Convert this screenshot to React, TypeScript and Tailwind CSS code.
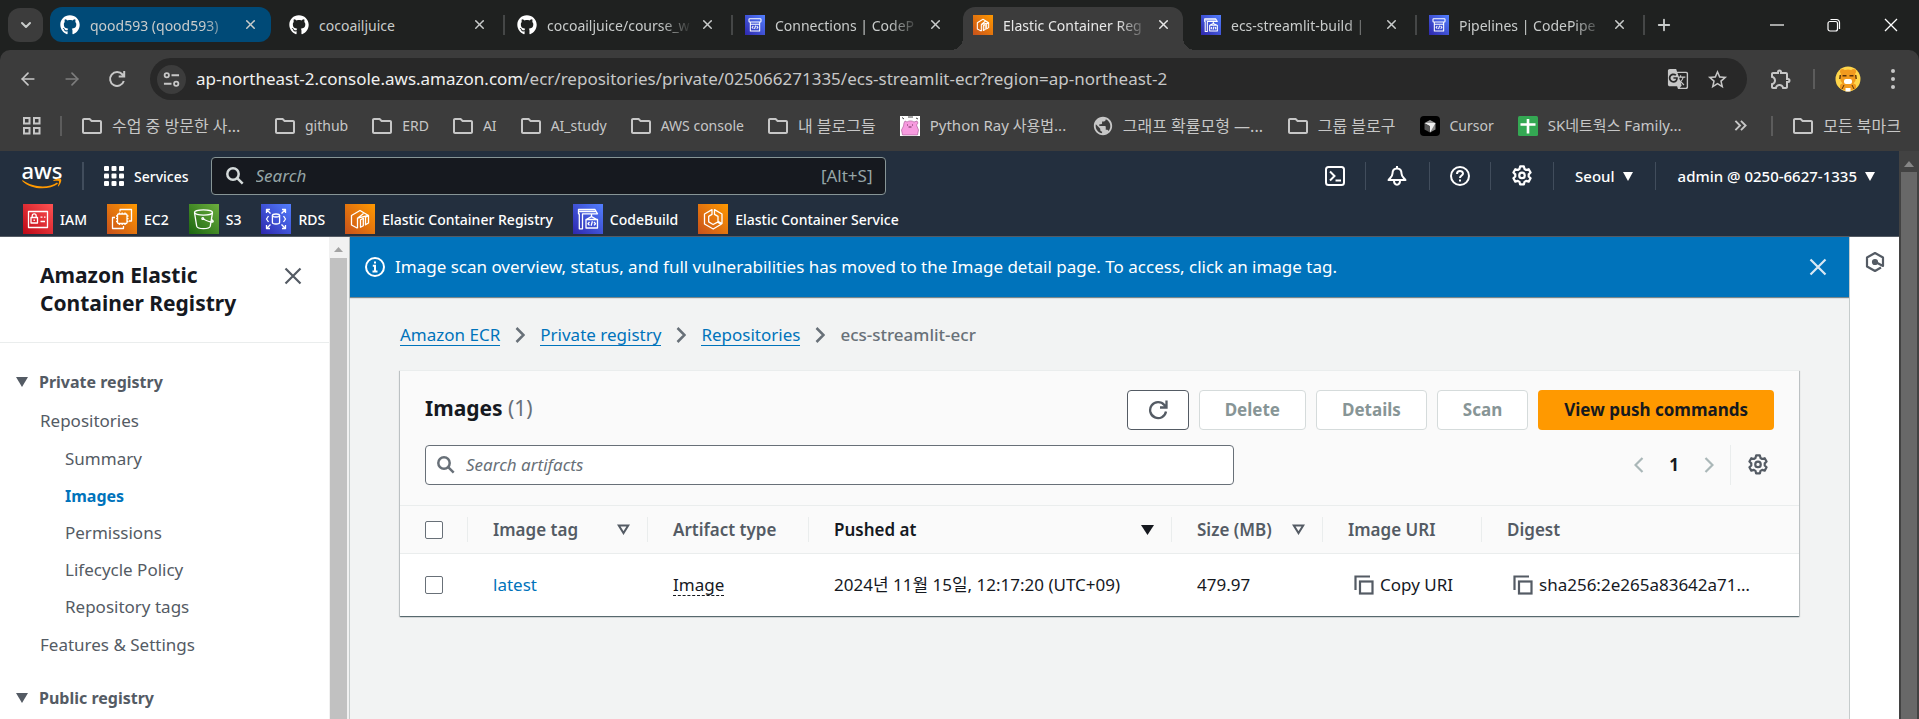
import { useState, type ReactNode } from "react";
import { FaGithub } from "react-icons/fa";
import { MdOutlineExtension, MdStarOutline, MdOutlineFolder, MdPublic, MdGTranslate } from "react-icons/md";
import { ArrowLeft, ArrowRight, ChevronDown, Plus, X } from "lucide-react";

type TileKind = "iam" | "ec2" | "s3" | "rds" | "ecr" | "build" | "ecs" | "pipe";

const TILE_GRADIENT: Record<TileKind, [string, string]> = {
  iam: ["#bd0816", "#ff5252"],
  ec2: ["#c8511b", "#ff9900"],
  s3: ["#1b660f", "#6cae3e"],
  rds: ["#2e27ad", "#527fff"],
  ecr: ["#c8511b", "#ff9900"],
  build: ["#2e27ad", "#527fff"],
  ecs: ["#c8511b", "#ff9900"],
  pipe: ["#2e27ad", "#527fff"],
};

const TILE_ART: Record<TileKind, ReactNode> = {
  iam: (
    <>
      <rect x="5.5" y="7.5" width="19" height="16" />
      <rect x="8" y="13.5" width="6.5" height="5.5" />
      <path d="M9.2 13.5v-1.6a2 2 0 0 1 4 0v1.6M11.2 15.6v1.4M17.500 13.200h2M21 13.200h1.500M17.500 17.500h4.500" />
    </>
  ),
  ec2: (
    <>
      <path d="M13 7.500V5.500h11.500v11.500h-2.500M8 13.500H5.500v11h11v-2.500" />
      <rect x="10.500" y="10" width="9.500" height="9.500" rx="1" />
      <path d="M12.500 8.500v1.500M15.200 8.500v1.500M18 8.500v1.500M12.500 19.500V21M15.200 19.500V21M18 19.500V21M9 12h1.500M9 14.700h1.500M9 17.500h1.500M20 12h1.500M20 14.700h1.500M20 17.500h1.500" />
    </>
  ),
  s3: (
    <>
      <ellipse cx="14.500" cy="8.500" rx="9" ry="2.600" />
      <path d="M5.500 8.700l2.200 13.500c.4 1.600 3.500 2.500 6.800 2.500s6.400-.9 6.800-2.500l2.200-13.500M14 14.700c3.500 2 7 3.400 9.500 3.300 1.300-.1.600-1.500-1-2.400" />
      <circle cx="13.800" cy="14.500" r=".9" />
    </>
  ),
  rds: (
    <>
      <path d="M5.500 9V5.500H9M5.800 5.800l3.700 3.700M21 5.500h3.500V9M24.200 5.800l-3.700 3.700M5.500 21v3.500H9M5.800 24.200l3.700-3.700M21 24.500h3.500V21M24.200 24.200l-3.700-3.700M7.500 12l-2 3 2 3M22.500 12l2 3-2 3" />
      <ellipse cx="15" cy="11.500" rx="3.600" ry="1.500" />
      <path d="M11.400 11.500v7c0 .8 1.600 1.500 3.600 1.500s3.600-.7 3.600-1.500v-7" />
    </>
  ),
  ecr: (
    <>
      <path d="M12.500 24.200L6.500 21v-9.500l8.500-5 8.500 5M12.500 24.200v-10l11-2.700M12.500 14.200l6-4.800" />
      <path d="M15.500 15.800l2.800-1.600v7.500l-2.800 1.500zM20.500 13.200l3-1.700v7.500l-3 1.800z" />
    </>
  ),
  build: (
    <>
      <path d="M5.500 5.500h16.500l2.500 4.300H9.500v15H6.300V9.800H5.500zM5.500 7.500h17.500M18.500 10v3M13 15.500l5.500-2.800 5.500 2.800M13 15.500h11.500v8.500H13z" />
      <path d="M16.500 18l-1.500 1.700 1.500 1.700M21 18l1.500 1.700-1.500 1.700M19.400 17.300l-1.300 4.500" />
    </>
  ),
  ecs: (
    <>
      <path d="M14 5.600L6.500 10v10l8.700 5 8-4.700-3.600-2.200-4.500 2.400-4.400-2.600v-5.500l3.300-2zM16.500 5.600l7.500 4.400v9.500l-4-2.300v-4.800l-3.500-2z" />
    </>
  ),
  pipe: (
    <>
      <rect x="6" y="5.500" width="18" height="5" rx="1" />
      <path d="M8 10.500V24h14V10.500M8 14h14" />
      <path d="M12.500 16.500l-1.800 2 1.800 2M17.500 16.500l1.800 2-1.800 2M15.900 16l-1.600 5" />
    </>
  ),
};

function ServiceTile({ kind, id, small = false }: { kind: TileKind; id: string; small?: boolean }) {
  const [from, to] = TILE_GRADIENT[kind];
  return (
    <svg viewBox="0 0 30 30" className={small ? "size-5 shrink-0" : "size-[30px] shrink-0"} aria-hidden="true">
      <defs>
        <linearGradient id={id} x1="0" y1="1" x2="1" y2="0">
          <stop offset="0" stopColor={from} />
          <stop offset="1" stopColor={to} />
        </linearGradient>
      </defs>
      <rect width="30" height="30" fill={`url(#${id})`} />
      <g fill="none" stroke="#fff" strokeWidth={small ? 1.6 : 1.3} strokeLinejoin="round">
        {TILE_ART[kind]}
      </g>
    </svg>
  );
}

function GearIcon({ className }: { className: string }) {
  return (
    <svg viewBox="0 0 20 20" className={className} fill="none" stroke="currentColor" strokeWidth="2" strokeLinejoin="round" aria-hidden="true">
      <path d="M8.300 1.300h3.400l.6 2.300 1.500.9 2.300-.7 1.700 3-1.700 1.700v1.900l1.700 1.700-1.700 3-2.300-.7-1.500.9-.6 2.400H8.300l-.6-2.400-1.500-.9-2.300.7-1.700-3 1.700-1.700V8.500L2.200 6.800l1.700-3 2.300.7 1.500-.9z" />
      <circle cx="10" cy="9.500" r="2.500" />
    </svg>
  );
}

function SearchIcon({ className }: { className: string }) {
  return (
    <svg viewBox="0 0 18 18" className={className} fill="none" stroke="currentColor" strokeWidth="2.500" aria-hidden="true">
      <circle cx="7" cy="7" r="5.700" />
      <path d="M11.200 11.200l5.500 5.500" />
    </svg>
  );
}

function CloseIcon({ className }: { className: string }) {
  return (
    <svg viewBox="0 0 18 18" className={className} fill="none" stroke="currentColor" strokeWidth="2.200" aria-hidden="true">
      <path d="M1.500 1.500l15 15M16.500 1.500l-15 15" />
    </svg>
  );
}

function CopyIcon() {
  return (
    <svg viewBox="0 0 20 20" className="size-5 shrink-0 text-[#545b64]" fill="none" stroke="currentColor" strokeWidth="2.200" aria-hidden="true">
      <path d="M1.500 15V1.500H16" />
      <rect x="6" y="6.500" width="12.500" height="12" />
    </svg>
  );
}

function Caret({ className }: { className: string }) {
  return (
    <svg viewBox="0 0 12 10" className={className} fill="currentColor" preserveAspectRatio="none" aria-hidden="true">
      <path d="M0 0h12L6 10z" />
    </svg>
  );
}

function SortCaret() {
  return (
    <svg viewBox="0 0 13 11" className="h-[11px] w-[13px]" fill="none" stroke="currentColor" strokeWidth="2" aria-hidden="true">
      <path d="M1.800 1.500h9.400l-4.700 7.500z" />
    </svg>
  );
}

/* ---------- Browser window ---------- */

type Tab = { title: string; icon: ReactNode; state?: "active"; sep?: boolean };

const GITHUB = <FaGithub className="size-5 shrink-0 text-white" />;

const TABS: Tab[] = [
  { title: "cocoailjuice", icon: GITHUB, sep: true },
  { title: "cocoailjuice/course_w", icon: GITHUB, sep: true },
  { title: "Connections | CodeP", icon: <ServiceTile small kind="pipe" id="t1" /> },
  { title: "Elastic Container Reg", icon: <ServiceTile small kind="ecr" id="t2" />, state: "active" },
  { title: "ecs-streamlit-build |", icon: <ServiceTile small kind="build" id="t3" />, sep: true },
  { title: "Pipelines | CodePipe", icon: <ServiceTile small kind="pipe" id="t4" />, sep: true },
];

function TabBody({ icon, title }: { icon: ReactNode; title: string }) {
  const faded = title !== "cocoailjuice";
  return (
    <>
      {icon}
      <span
        className={
          faded
            ? "ml-[10px] w-[146px] overflow-hidden pt-0.5 whitespace-nowrap [mask-image:linear-gradient(to_right,black_78%,transparent)]"
            : "ml-[10px] w-[146px] overflow-hidden pt-0.5 whitespace-nowrap"
        }
      >
        {title}
      </span>
      <button aria-label="Close tab" className="ml-[6px] grid size-4 place-items-center">
        <X className="size-[15px]" strokeWidth={2.4} />
      </button>
    </>
  );
}

function TabItem({ tab }: { tab: Tab }) {
  const active = tab.state === "active";
  return (
    <div
      className={
        active
          ? "relative mt-[7px] mr-2 flex h-[43px] w-[220px] items-center rounded-t-xl bg-[#3c3c3c] pb-2 pl-[10px] text-[#e8e8e8] before:absolute before:bottom-0 before:-left-3 before:size-3 before:bg-[radial-gradient(circle_at_0_0,transparent_12px,#3c3c3c_12px)] after:absolute after:-right-3 after:bottom-0 after:size-3 after:bg-[radial-gradient(circle_at_100%_0,transparent_12px,#3c3c3c_12px)]"
          : "mt-[7px] flex h-[43px] w-[228px] items-center pb-2 pl-[10px]"
      }
    >
      <TabBody icon={tab.icon} title={tab.title} />
      {tab.sep ? <span className="ml-4 h-5 w-0.5 bg-[#454747]" /> : null}
    </div>
  );
}

function TabStrip() {
  return (
    <div className="flex h-[50px] bg-[#1f2120] text-[14px] text-[#c9cccb]">
      <button aria-label="Search tabs" className="mt-2 ml-2 grid h-[34px] w-[35px] place-items-center rounded-xl bg-[#3c3c3c]">
        <ChevronDown className="size-4" strokeWidth={3} />
      </button>
      <div className="mt-[7px] ml-[7px] flex h-[35px] w-[221px] items-center rounded-xl bg-[#004a77] pl-[10px]">
        <TabBody icon={GITHUB} title="qood593 (qood593)" />
      </div>
      <div className="ml-2 flex">
        {TABS.map((t) => (
          <TabItem key={t.title} tab={t} />
        ))}
      </div>
      <button aria-label="New tab" className="ml-[5px] grid h-[50px] w-6 place-items-center">
        <Plus className="size-[18px]" strokeWidth={2.4} />
      </button>
      <div className="ml-auto flex items-center gap-[43px] pr-[21px] text-white">
        <button aria-label="Minimize">
          <svg viewBox="0 0 14 14" className="size-[14px]" stroke="currentColor" strokeWidth="1.200"><path d="M0 7h14" /></svg>
        </button>
        <button aria-label="Restore">
          <svg viewBox="0 0 14 14" className="size-[14px]" fill="none" stroke="currentColor" strokeWidth="1.200">
            <rect x="1" y="3.500" width="9.500" height="9.500" rx="2" />
            <path d="M3.500 1.500h6a3 3 0 0 1 3 3V11" />
          </svg>
        </button>
        <button aria-label="Close window">
          <svg viewBox="0 0 14 14" className="size-[14px]" stroke="currentColor" strokeWidth="1.300"><path d="M1 1l12 12M13 1L1 13" /></svg>
        </button>
      </div>
    </div>
  );
}

function Toolbar() {
  return (
    <div className="bg-[#1f2120]">
      <div className="flex items-center rounded-t-[10px] bg-[#3c3c3c] pt-2 pl-[18px] text-[#c7c7c7]">
        <button aria-label="Back" className="grid size-5 place-items-center"><ArrowLeft className="size-5" /></button>
        <button aria-label="Forward" className="ml-6 grid size-5 place-items-center text-[#7d7d7d]"><ArrowRight className="size-5" /></button>
        <button aria-label="Reload" className="ml-[25px] grid size-5 place-items-center">
          <svg viewBox="0 0 20 20" className="size-5" fill="none" stroke="currentColor" strokeWidth="2">
            <path d="M16.800 12A7 7 0 1 1 15.500 5.500L17 7.200M17.200 2v5.500h-5.500" />
          </svg>
        </button>
        <div className="ml-[23px] flex h-[42px] flex-1 items-center rounded-full bg-[#282828] pl-[7px]">
          <button aria-label="Site information" className="grid size-[29px] place-items-center rounded-full bg-[#3c3c3c]">
            <svg viewBox="0 0 18 18" className="size-[17px]" fill="none" stroke="currentColor" strokeWidth="1.900">
              <circle cx="4" cy="4.500" r="2.300" />
              <path d="M9 4.500h8M1 13.500h8" />
              <circle cx="14" cy="13.500" r="2.300" />
            </svg>
          </button>
          <div className="ml-[10px] flex-1 text-[17px] whitespace-nowrap text-[#c7c7c7]">
            <span className="text-[#f0f0f0]">ap-northeast-2.console.aws.amazon.com</span>/ecr/repositories/private/025066271335/ecs-streamlit-ecr?region=ap-northeast-2
          </div>
          <button aria-label="Translate"><MdGTranslate className="size-[22px]" /></button>
          <button aria-label="Bookmark this page" className="mr-[18px] ml-[17px]"><MdStarOutline className="size-[23px]" /></button>
        </div>
        <button aria-label="Extensions" className="ml-[22px]"><MdOutlineExtension className="size-6" /></button>
        <span className="ml-5 h-5 w-0.5 bg-[#5c5c5c]" />
        <button aria-label="Profile" className="ml-5">
          <svg viewBox="0 0 26 26" className="size-[26px]">
            <circle cx="13" cy="13" r="12.500" fill="#ffd54a" />
            <circle cx="7.500" cy="5.500" r="2.500" fill="#f29a1f" />
            <circle cx="18.500" cy="5.500" r="2.500" fill="#f29a1f" />
            <circle cx="13" cy="11.500" r="8" fill="#f29a1f" />
            <path d="M5 19c2-3 14-3 16 0v3.500l-8 3-8-3z" fill="#f29a1f" />
            <path d="M7.500 9.800h4M14.500 9.800h4M5.300 9l-.5 4M20.700 9l.5 4" stroke="#5b3208" strokeWidth="1.400" />
            <rect x="9" y="13" width="8" height="5" rx="2" fill="#fff" />
            <path d="M10.500 22h5v3.500h-5z" fill="#fff" />
            <path d="M9 19l-2 4M17 19l2 4" stroke="#5b3208" strokeWidth="1" />
          </svg>
        </button>
        <button aria-label="Browser menu" className="mr-4 ml-[22px] grid h-6 w-5 place-items-center">
          <svg viewBox="0 0 4 20" className="h-5 w-1" fill="currentColor">
            <circle cx="2" cy="2" r="2" /><circle cx="2" cy="10" r="2" /><circle cx="2" cy="18" r="2" />
          </svg>
        </button>
      </div>
    </div>
  );
}

const FOLDER = <MdOutlineFolder className="-mx-0.5 size-6 shrink-0" />;

const BOOKMARKS: { label: string; icon: ReactNode; size?: string }[] = [
  { label: "수업 중 방문한 사...", icon: FOLDER, size: "w-[139px] text-[16px]" },
  { label: "github", icon: FOLDER },
  { label: "ERD", icon: FOLDER },
  { label: "AI", icon: FOLDER },
  { label: "AI_study", icon: FOLDER },
  { label: "AWS console", icon: FOLDER },
  { label: "내 블로그들", icon: FOLDER, size: "text-[16px]" },
  {
    label: "Python Ray 사용법...",
    size: "w-[139px] text-[15px]",
    icon: (
      <svg viewBox="0 0 20 20" className="size-5 shrink-0">
        <rect width="20" height="20" fill="#fff" />
        <path d="M4 7l1-2 2 1c2-1.500 5-1.500 7 0l3-1 1 2-1.500 2 2 5-1 5H2.500l-1-5L3.500 10z" fill="#f79bdf" stroke="#a3508e" strokeWidth=".6" />
        <path d="M2 1.500l2 1.500M8 1h5M16 2l2 1" stroke="#444" strokeWidth="1" />
        <path d="M7 9h1M12 9h1M8.500 11h3" stroke="#5c2149" strokeWidth=".9" />
      </svg>
    ),
  },
  { label: "그래프 확률모형 —...", icon: <MdPublic className="-mx-px size-[22px] shrink-0" />, size: "w-[141px] text-[16px]" },
  { label: "그룹 블로구", icon: FOLDER, size: "text-[16px]" },
  {
    label: "Cursor",
    icon: (
      <svg viewBox="0 0 20 20" className="size-5 shrink-0">
        <rect width="20" height="20" rx="4" fill="#000" />
        <path d="M10 4l5.500 3L10 10 4.500 7z" fill="#999" />
        <path d="M4.500 7l5.500 3v6.500l-5.500-3z" fill="#555" />
        <path d="M15.500 7L10 10v6.500l5.500-3z" fill="#888" />
        <path d="M4.500 7h11L10 16.500V10z" fill="#eee" />
      </svg>
    ),
  },
  {
    label: "SK네트웍스 Family...",
    size: "text-[15px]",
    icon: (
      <svg viewBox="0 0 20 20" className="size-5 shrink-0">
        <rect width="20" height="20" rx="1.500" fill="#34a853" />
        <path d="M10 3v14.500M2.500 8.500h15" stroke="#fff" strokeWidth="2.600" />
      </svg>
    ),
  },
];

function BookmarkBar() {
  return (
    <div className="flex h-[51px] items-center bg-[#3c3c3c] pl-[23px] text-[14px] whitespace-nowrap text-[#c7c7c7]">
      <button aria-label="Apps">
        <svg viewBox="0 0 18 18" className="size-[18px]" fill="none" stroke="currentColor" strokeWidth="2">
          <rect x="1" y="1" width="5.500" height="5.500" /><rect x="11" y="1" width="5.500" height="5.500" />
          <rect x="1" y="11" width="5.500" height="5.500" /><rect x="11" y="11" width="5.500" height="5.500" />
        </svg>
      </button>
      <span className="ml-[19px] h-5 w-0.5 bg-[#5c5c5c]" />
      <div className="ml-5 flex gap-6">
        {BOOKMARKS.map((b) => (
          <a key={b.label} href="#" className="flex items-center gap-[10px]">
            {b.icon}
            <span className={b.size}>{b.label}</span>
          </a>
        ))}
      </div>
      <button aria-label="More bookmarks" className="ml-auto">
        <svg viewBox="0 0 14 14" className="size-[13px]" fill="none" stroke="currentColor" strokeWidth="2"><path d="M1.500 2l5 5-5 5M7.500 2l5 5-5 5" /></svg>
      </button>
      <span className="ml-6 h-5 w-0.5 bg-[#5c5c5c]" />
      <a href="#" className="mr-[18px] ml-5 flex items-center gap-[10px] text-[16px]">
        {FOLDER}모든 북마크
      </a>
    </div>
  );
}

/* ---------- AWS console ---------- */

const FAVORITES: { label: string; kind: TileKind }[] = [
  { label: "IAM", kind: "iam" },
  { label: "EC2", kind: "ec2" },
  { label: "S3", kind: "s3" },
  { label: "RDS", kind: "rds" },
  { label: "Elastic Container Registry", kind: "ecr" },
  { label: "CodeBuild", kind: "build" },
  { label: "Elastic Container Service", kind: "ecs" },
];

function NavSep() {
  return <span className="h-7 w-px bg-[#414d5c]" />;
}

function ConsoleHeader() {
  return (
    <header className="border-b border-[#545b64] bg-[#232f3e] text-[14px] font-medium text-white">
      <div className="flex h-[50px] items-center pl-[22px]">
        <a href="#" aria-label="AWS home" className="flex w-10 flex-col items-center">
          <span className="text-[22px] leading-[15px] font-medium">aws</span>
          <svg viewBox="0 0 40 11" className="h-[11px] w-10" aria-hidden="true">
            <path d="M.5 2c10 7.500 26 8.500 34.500 2.500l1 1.200C27 12.500 9 12 .2 3z" fill="#ff9900" />
            <path d="M31.500 2.200c3-1.800 7-1.700 7.600-.8.700 1-.6 5-2.600 6.800-.5.400-.8.200-.6-.3.700-1.700 1.500-4 1-4.700-.5-.6-3.500-.5-5-.2-.6 0-.8-.5-.4-.8z" fill="#ff9900" />
          </svg>
        </a>
        <span className="ml-5 h-7 w-0.5 bg-[#414d5c]" />
        <button className="ml-5 flex items-center gap-[10px]">
          <svg viewBox="0 0 20 20" className="size-5" fill="currentColor" aria-hidden="true">
            {[0, 7.5, 15].flatMap((y) => [0, 7.5, 15].map((x) => <rect key={`${x}-${y}`} x={x} y={y} width="5" height="5" rx="1" />))}
          </svg>
          Services
        </button>
        <label className="ml-[22px] flex h-[38px] w-[675px] items-center rounded-sm border border-[#879596] bg-[#16191f] pr-[12px] pl-[14px] text-[17px] font-normal text-[#95a5a6]">
          <SearchIcon className="size-[18px] text-[#d5dbdb]" />
          <input aria-label="Search" placeholder="Search" className="ml-3 min-w-0 flex-1 bg-transparent italic outline-none placeholder:text-[#95a5a6]" />
          [Alt+S]
        </label>
        <div className="ml-auto flex items-center text-[15px]">
          <button aria-label="CloudShell">
            <svg viewBox="0 0 20 20" className="size-5" fill="none" stroke="currentColor" strokeWidth="2">
              <rect x="1" y="1" width="18" height="18" rx="2.500" />
              <path d="M5 5.500l4.500 4.500L5 14.500M10.500 14.500H16" />
            </svg>
          </button>
          <span className="w-5" /><NavSep /><span className="w-[21px]" />
          <button aria-label="Notifications">
            <svg viewBox="0 0 20 20" className="size-5" fill="none" stroke="currentColor" strokeWidth="2" strokeLinejoin="round">
              <path d="M10 2.500c-3.500 0-4.500 2.500-4.500 5 0 3-2 4-4 6.500h17c-2-2.500-4-3.500-4-6.500 0-2.500-1-5-4.500-5zM10 0v2.500M7 14.500c0 5.500 6 5.500 6 0" />
            </svg>
          </button>
          <span className="w-[22px]" /><NavSep /><span className="w-5" />
          <button aria-label="Help">
            <svg viewBox="0 0 20 20" className="size-5" fill="none" stroke="currentColor" strokeWidth="2">
              <circle cx="10" cy="10" r="9" />
              <path d="M7 8c0-4 6-3.800 6-.5 0 2-3 2-3 4.500M10 13.500v2" />
            </svg>
          </button>
          <span className="w-5" /><NavSep /><span className="w-5" />
          <button aria-label="Settings"><GearIcon className="size-[22px]" /></button>
          <span className="w-5" /><NavSep /><span className="w-[21px]" />
          <button className="flex items-center gap-2">Seoul <Caret className="h-[9px] w-[10px]" /></button>
          <span className="w-[22px]" /><NavSep /><span className="w-[22px]" />
          <button className="flex items-center gap-2">admin @ 0250-6627-1335 <Caret className="h-[9px] w-[10px]" /></button>
          <span className="w-6" />
        </div>
      </div>
      <nav className="flex h-[35px] items-start gap-5 pt-[3px] pl-[23px]">
        {FAVORITES.map((f) => (
          <a key={f.label} href="#" className="flex items-center gap-[7px]">
            <ServiceTile kind={f.kind} id={`fav-${f.kind}`} />
            {f.label}
          </a>
        ))}
      </nav>
    </header>
  );
}

function Sidebar() {
  const sub = ["Summary", "Images", "Permissions", "Lifecycle Policy", "Repository tags"];
  return (
    <aside className="flex w-[350px] shrink-0 bg-white">
      <div className="flex-1 text-[#545b64]">
        <div className="flex items-start justify-between border-b border-[#eaeded] pt-6 pr-[27px] pb-[25px] pl-10">
          <h2 className="text-[21px] leading-7 font-bold text-[#16191f]">
            Amazon Elastic
            <br />
            Container Registry
          </h2>
          <button aria-label="Close navigation" className="mt-[6px]"><CloseIcon className="size-[18px]" /></button>
        </div>
        <nav className="pt-[23px]">
          <button className="flex h-8 items-center gap-[11px] pl-4 text-[16px] font-bold">
            <Caret className="h-[10px] w-3" />
            Private registry
          </button>
          <ul className="mt-1 pl-10">
            <li className="flex h-[37px] items-center"><a href="#">Repositories</a></li>
            <li className="my-px pl-[25px]">
              <ul>
                {sub.map((s) => (
                  <li key={s} className="flex h-[37px] items-center">
                    <a href="#" className={s === "Images" ? "text-[16px] font-bold text-[#0073bb]" : ""}>{s}</a>
                  </li>
                ))}
              </ul>
            </li>
            <li className="flex h-[37px] items-center"><a href="#">Features &amp; Settings</a></li>
          </ul>
          <button className="mt-[19px] flex h-8 items-center gap-[11px] pl-4 text-[16px] font-bold">
            <Caret className="h-[10px] w-3" />
            Public registry
          </button>
        </nav>
      </div>
      <div className="flex w-[21px] flex-col items-center border-r border-[#c6cccc] bg-[#f1f1f1] pr-0.5">
        <div className="grid h-[21px] place-items-center text-[#a3a3a3]"><Caret className="mt-1 h-[5px] w-[9px] rotate-180" /></div>
        <div className="w-[17px] flex-1 bg-[#c1c1c1]" />
      </div>
    </aside>
  );
}

function Crumb({ children }: { children: string }) {
  return (
    <>
      <a href="#" className="border-b border-[#0073bb] leading-[21px] text-[#0073bb]">{children}</a>
      <svg viewBox="0 0 10 16" className="h-4 w-[10px] text-[#687078]" fill="none" stroke="currentColor" strokeWidth="2.500" aria-hidden="true">
        <path d="M1.500 1l7 7-7 7" />
      </svg>
    </>
  );
}

function PlainButton({ children }: { children: ReactNode }) {
  return (
    <button className="h-10 rounded-sm border border-[#d5dbdb] bg-white px-[25px] font-bold text-[#879596]">{children}</button>
  );
}

function HeadCell({ label, sort, strong = false, last = false }: { label: string; sort?: ReactNode; strong?: boolean; last?: boolean }) {
  return (
    <th scope="col" className={strong ? "p-0 text-left font-semibold text-[#16191f]" : "p-0 text-left font-semibold"}>
      <div className={last ? "flex h-[25px] items-center pr-5 pl-[25px]" : "flex h-[25px] items-center justify-between border-r border-[#eaeded] pr-[17px] pl-[25px] whitespace-nowrap"}>
        {label}
        {sort}
      </div>
    </th>
  );
}

function Checkbox({ label, checked, onChange }: { label: string; checked: boolean; onChange: (v: boolean) => void }) {
  return (
    <input
      type="checkbox"
      aria-label={label}
      checked={checked}
      onChange={(e) => onChange(e.target.checked)}
      className="block size-[18px] appearance-none rounded-[2px] border border-[#687078] bg-white checked:bg-[#0073bb]"
    />
  );
}

function ImagesCard() {
  const [picked, setPicked] = useState(false);
  return (
    <section className="border-t border-[#eaeded] bg-white shadow-[0_1px_1px_0_rgba(0,28,36,0.5),1px_1px_1px_0_rgba(0,28,36,0.15),-1px_1px_1px_0_rgba(0,28,36,0.15)]">
      <div className="bg-[#fafafa] px-[25px] pt-[19px] pb-5">
        <div className="flex h-10 items-center gap-[10px]">
          <h1 className="mr-auto pb-1 text-[21px] leading-7 font-bold text-[#16191f]">
            Images <span className="font-normal text-[#687078]">(1)</span>
          </h1>
          <button aria-label="Refresh" className="grid h-10 w-[62px] place-items-center rounded-sm border border-[#545b64] bg-white text-[#545b64]">
            <svg viewBox="0 0 20 20" className="size-5" fill="none" stroke="currentColor" strokeWidth="2.300">
              <path d="M18 11.500A8 8 0 1 1 16.300 5L18 7M18.500 .500V7.500H12" />
            </svg>
          </button>
          <PlainButton>Delete</PlainButton>
          <PlainButton>Details</PlainButton>
          <PlainButton>Scan</PlainButton>
          <button className="h-10 rounded-sm bg-[#ff9900] px-[26px] font-bold text-[#16191f]">View push commands</button>
        </div>
        <div className="mt-[15px] flex items-center">
          <label className="flex h-10 w-[60%] items-center rounded-sm border border-[#687078] bg-white px-[11px]">
            <SearchIcon className="size-[18px] text-[#687078]" />
            <input aria-label="Search artifacts" placeholder="Search artifacts" className="ml-[11px] min-w-0 flex-1 bg-transparent italic outline-none placeholder:text-[#687078]" />
          </label>
          <div className="ml-auto flex h-10 items-center text-[#aab7b8]">
            <button aria-label="Previous page">
              <svg viewBox="0 0 10 16" className="h-4 w-[10px]" fill="none" stroke="currentColor" strokeWidth="2.200"><path d="M8.500 1l-7 7 7 7" /></svg>
            </button>
            <span className="w-[60px] text-center font-bold text-[#16191f]">1</span>
            <button aria-label="Next page">
              <svg viewBox="0 0 10 16" className="h-4 w-[10px]" fill="none" stroke="currentColor" strokeWidth="2.200"><path d="M1.500 1l7 7-7 7" /></svg>
            </button>
            <span className="mr-4 ml-4 h-10 w-px bg-[#eaeded]" />
            <button aria-label="Preferences" className="mr-[5px] text-[#545b64]"><GearIcon className="size-[22px]" /></button>
          </div>
        </div>
      </div>
      <table className="w-full table-fixed border-collapse text-[#16191f]">
        <colgroup>
          <col className="w-[68px]" />
          <col className="w-[180px]" />
          <col className="w-[161px]" />
          <col className="w-[363px]" />
          <col className="w-[151px]" />
          <col className="w-[159px]" />
          <col />
        </colgroup>
        <thead>
          <tr className="h-12 border-y border-[#eaeded] bg-[#fafafa] text-[#545b64]">
            <th className="p-0">
              <div className="flex h-[25px] items-center border-r border-[#eaeded] pl-[25px]">
                <Checkbox label="Select all images" checked={picked} onChange={setPicked} />
              </div>
            </th>
            <HeadCell label="Image tag" sort={<SortCaret />} />
            <HeadCell label="Artifact type" />
            <HeadCell label="Pushed at" strong sort={<Caret className="h-[10px] w-[13px]" />} />
            <HeadCell label="Size (MB)" sort={<SortCaret />} />
            <HeadCell label="Image URI" />
            <HeadCell label="Digest" last />
          </tr>
        </thead>
        <tbody>
          <tr className="h-[62px]">
            <td className="p-0 pl-[25px]"><Checkbox label="Select latest" checked={picked} onChange={setPicked} /></td>
            <td className="p-0 pl-[25px]"><a href="#" className="text-[#0073bb]">latest</a></td>
            <td className="p-0 pl-[25px]"><span className="inline-block border-b border-dashed border-[#16191f] leading-[21px]">Image</span></td>
            <td className="p-0 pl-[25px] whitespace-nowrap">2024년 11월 15일, 12:17:20 (UTC+09)</td>
            <td className="p-0 pl-[25px]">479.97</td>
            <td className="p-0 pl-[31px]"><button className="flex items-center gap-[6px]"><CopyIcon />Copy URI</button></td>
            <td className="p-0 pl-[31px]"><button className="flex items-center gap-[6px]"><CopyIcon />sha256:2e265a83642a71…</button></td>
          </tr>
        </tbody>
      </table>
    </section>
  );
}

export default function App() {
  return (
    <div className="flex min-h-screen flex-col bg-[#f2f3f3] font-['Noto_Sans','Noto_Sans_CJK_KR',sans-serif]">
      <TabStrip />
      <Toolbar />
      <BookmarkBar />
      <div className="flex flex-1">
        <div className="flex min-w-0 flex-1 flex-col">
          <ConsoleHeader />
          <div className="flex flex-1 text-[17px] leading-6">
            <Sidebar />
            <main className="min-w-0 flex-1">
              <div className="flex h-[60px] items-center bg-[#0073bb] pr-[22px] pl-[15px] text-white shadow-[0_1px_1px_rgba(0,28,36,0.5)]">
                <svg viewBox="0 0 20 20" className="size-5" fill="none" stroke="currentColor" strokeWidth="2" aria-hidden="true">
                  <circle cx="10" cy="10" r="9" />
                  <path d="M10 4.500v2M7.800 8.700H10V15M7.500 14.500h5" />
                </svg>
                <p className="ml-[10px]">
                  Image scan overview, status, and full vulnerabilities has moved to the Image detail page. To access, click an image tag.
                </p>
                <button aria-label="Dismiss" className="ml-auto text-[#d9e8f3]"><CloseIcon className="size-[18px]" /></button>
              </div>
              <div className="px-[50px] pt-[27px]">
                <nav aria-label="Breadcrumb" className="mb-6 flex h-[22px] items-center gap-[15px]">
                  <Crumb>Amazon ECR</Crumb>
                  <Crumb>Private registry</Crumb>
                  <Crumb>Repositories</Crumb>
                  <span className="font-medium text-[#687078]">ecs-streamlit-ecr</span>
                </nav>
                <ImagesCard />
              </div>
            </main>
            <aside className="flex w-[50px] justify-center border-l border-[#c6cccc] bg-white pt-[15px]">
              <button aria-label="Open tools" className="h-5">
                <svg viewBox="0 0 20 20" className="size-5 text-[#545b64]" fill="none" stroke="currentColor" strokeWidth="2.200">
                  <path d="M16 15.500l-6 3.500-8-4.500v-9L10 1l8 4.500V14l-7.500-4" strokeLinejoin="round" />
                  <circle cx="10" cy="10" r="2" fill="currentColor" />
                </svg>
              </button>
            </aside>
          </div>
        </div>
        <div className="flex w-5 flex-col items-center bg-[#424242]">
          <div className="grid h-[21px] place-items-center text-[#868686]"><Caret className="mt-1 h-[6px] w-[10px] rotate-180" /></div>
          <div className="w-4 flex-1 bg-[#686868]" />
        </div>
      </div>
    </div>
  );
}
